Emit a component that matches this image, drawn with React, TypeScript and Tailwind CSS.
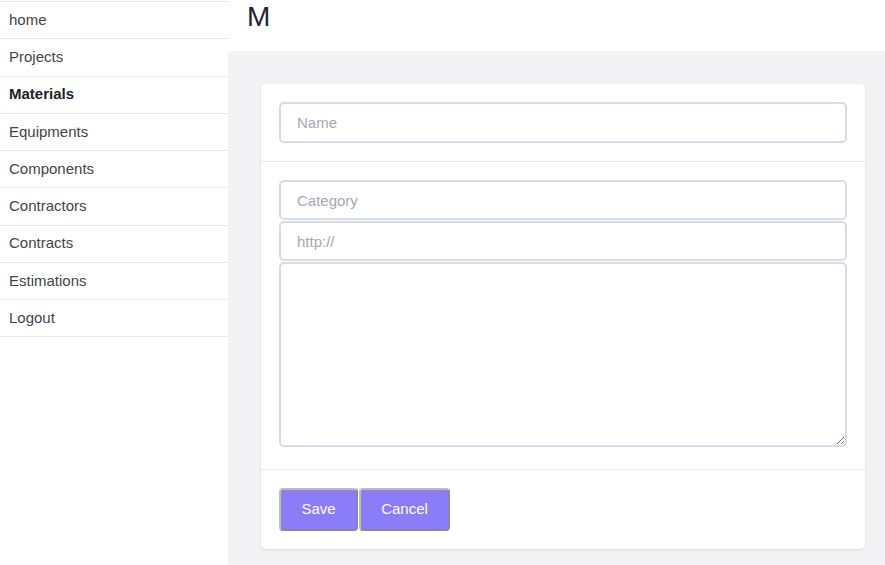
import React from 'react';

const navItems = [
  'home',
  'Projects',
  'Materials',
  'Equipments',
  'Components',
  'Contractors',
  'Contracts',
  'Estimations',
  'Logout',
];

export default function App() {
  return (
    <div className="flex h-[565px] w-[885px] bg-white font-['Liberation_Sans',Arial,sans-serif] text-[#333]">
      <nav className="w-[228px] shrink-0 pt-[1px]">
        <ul className="border-t border-[#e7e7ee]">
          {navItems.map((item) => (
            <li
              key={item}
              className={`h-[37.25px] flex items-center px-[9px] border-b border-[#e7e7ee] text-[15px] ${
                item === 'Materials' ? 'font-bold text-[#222]' : 'text-[#444]'
              }`}
            >
              {item}
            </li>
          ))}
        </ul>
      </nav>

      <main className="flex-1 flex flex-col min-w-0">
        <header className="h-[51px] shrink-0 px-[19px] flex items-start">
          <h1 className="text-[28px] leading-none mt-[3px] text-[#1f2430]">M</h1>
        </header>
        <div className="flex-1 bg-[#f3f3f6] pt-[33px] pl-[33px] pr-[20px]">
          <div className="bg-white rounded-[5px] shadow-[0_1px_3px_rgba(0,0,0,0.1)] h-[465px] flex flex-col">
            <div className="px-[18px] py-[18px] border-b border-[#e9ebf0]">
              <input
                placeholder="Name"
                className="w-full h-[41px] rounded-[5px] border-2 border-[#d6dbe5] px-[16px] text-[15px] placeholder:text-[#a3a9b5] outline-none"
              />
            </div>
            <div className="px-[18px] pt-[18px] pb-[22px] border-b border-[#e9ebf0] flex flex-col gap-[1px]">
              <input
                placeholder="Category"
                className="w-full h-[40px] rounded-[5px] border-2 border-[#d6dbe5] px-[16px] text-[15px] placeholder:text-[#a3a9b5] outline-none"
              />
              <input
                placeholder="http://"
                className="w-full h-[40px] rounded-[5px] border-2 border-[#d6dbe5] px-[16px] text-[15px] placeholder:text-[#a3a9b5] outline-none"
              />
              <textarea className="w-full h-[185px] rounded-[5px] border-2 border-[#d6dbe5] px-[16px] py-2 text-[15px] outline-none block" />
            </div>
            <div className="px-[18px] pt-[18px] flex gap-[1px]">
              <button className="h-[43px] w-[79px] rounded-[4px] bg-[#8b7df9] text-white text-[15px] border-2 border-[#bcbcc4] border-b-[#8a8a90] border-r-[#8a8a90]">
                Save
              </button>
              <button className="h-[43px] w-[91px] rounded-[4px] bg-[#8b7df9] text-white text-[15px] border-2 border-[#bcbcc4] border-b-[#8a8a90] border-r-[#8a8a90]">
                Cancel
              </button>
            </div>
          </div>
        </div>
      </main>
    </div>
  );
}
